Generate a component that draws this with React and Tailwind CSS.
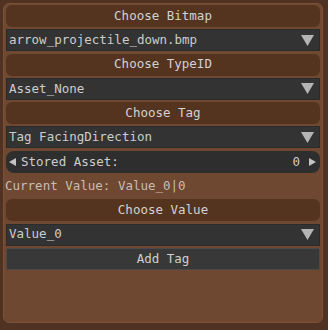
import React from "react";

const mono = { fontFamily: '"DejaVu Sans Mono", "Liberation Mono", monospace' };

const DownArrow = () => (
  <svg width="13" height="11" viewBox="0 0 13 11" className="shrink-0">
    <polygon points="0,0 13,0 6.5,11" fill="#b4b4b4" />
  </svg>
);

const SmallArrow = ({ dir }) => (
  <svg width="7" height="8" viewBox="0 0 7 8" className="shrink-0">
    {dir === "left" ? (
      <polygon points="7,0 7,8 0,4" fill="#c4c4c4" />
    ) : (
      <polygon points="0,0 0,8 7,4" fill="#c4c4c4" />
    )}
  </svg>
);

const BrownButton = ({ label }) => (
  <div className="h-[22px] rounded-[6px] bg-[#55341f] flex items-center justify-center text-[#d2d2d2]">
    {label}
  </div>
);

const Combo = ({ value }) => (
  <div className="h-[22px] bg-[#333333] border border-[#2b2b2b] flex items-center justify-between pl-[2px] pr-[5px] text-[#cdcdcd]">
    <span>{value}</span>
    <DownArrow />
  </div>
);

export default function App() {
  return (
    <div className="w-[328px] h-[330px] bg-[#4f3221] pt-[3px] pl-[3px]" style={mono}>
      <div className="w-[320px] h-[320px] rounded-[6px] bg-[#6e4830] border border-[#7a5036] px-[2px] pt-[1px] flex flex-col gap-[2.3px] text-[12.5px] leading-none">
        <BrownButton label="Choose Bitmap" />
        <Combo value="arrow_projectile_down.bmp" />
        <BrownButton label="Choose TypeID" />
        <Combo value="Asset_None" />
        <BrownButton label="Choose Tag" />
        <Combo value="Tag FacingDirection" />
        <div className="h-[22px] rounded-[8px] bg-[#2e2e2e] flex items-center pl-[3px] pr-[4px] text-[#cdcdcd]">
          <SmallArrow dir="left" />
          <span className="ml-[5px]">Stored Asset:</span>
          <span className="ml-auto mr-[9px]">0</span>
          <SmallArrow dir="right" />
        </div>
        <div className="h-[22px] flex items-center text-[#c9bdb2] -ml-[1px]">
          Current Value: Value_0|0
        </div>
        <BrownButton label="Choose Value" />
        <Combo value="Value_0" />
        <div className="h-[22px] bg-[#383838] border border-[#4a4a4a] rounded-[2px] flex items-center justify-center text-[#cfcfcf]">
          Add Tag
        </div>
      </div>
    </div>
  );
}
